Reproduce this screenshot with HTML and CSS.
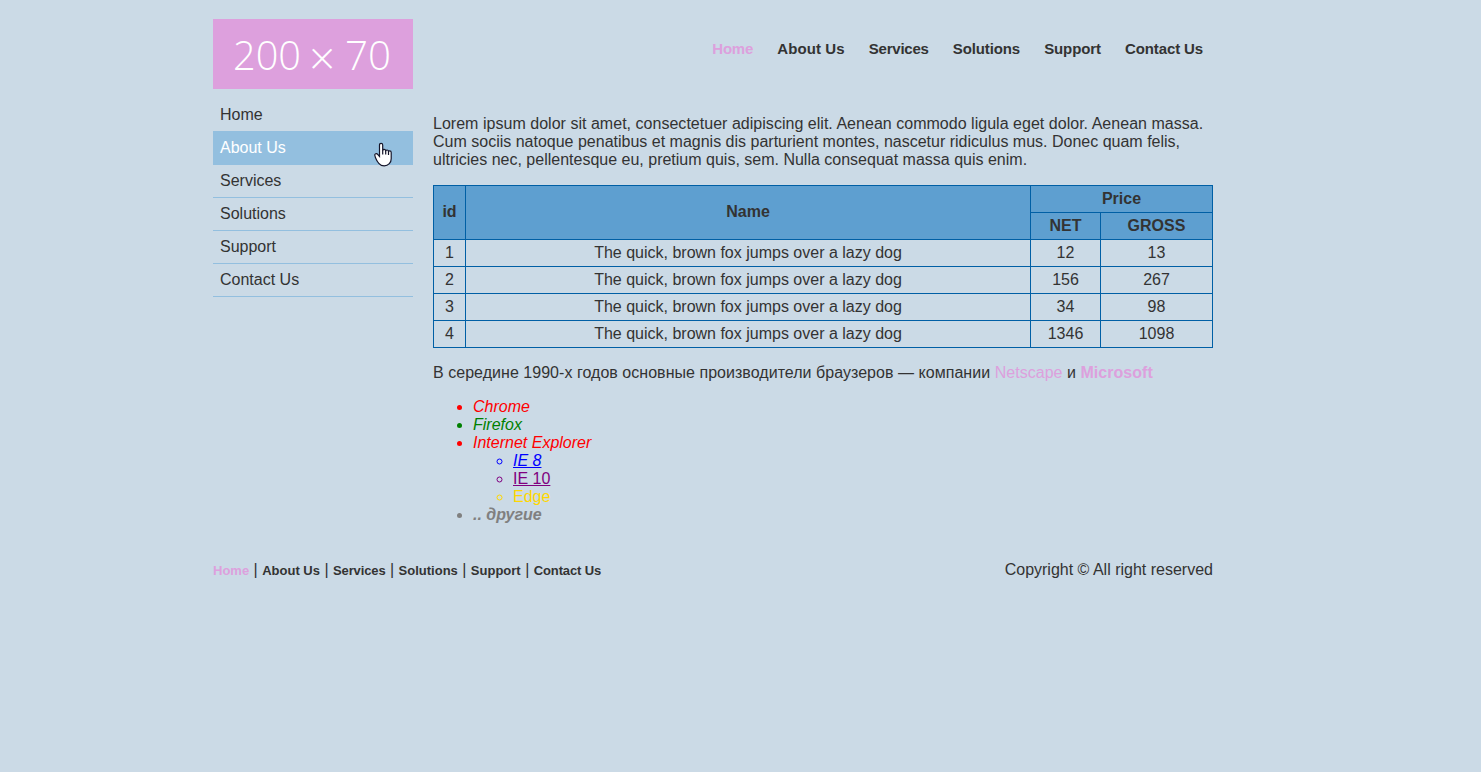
FILE: index.html
```html
<!DOCTYPE html>
<html lang="ru">
<head>
<meta charset="utf-8">
<title>Home</title>
<link rel="stylesheet" href="styles.css">
</head>
<body>
<div class="wrapper">
  <header class="header">
    <a class="logo"><svg width="200" height="70" viewBox="0 0 200 70"><g class="logo-text"><text x="20" y="51" textLength="68" lengthAdjust="spacingAndGlyphs">200</text><text class="times" x="96" y="56">×</text><text x="132" y="51" textLength="46" lengthAdjust="spacingAndGlyphs">70</text></g></svg></a>
    <nav class="top-nav">
      <a class="current tight">Home</a>
      <a class="loose">About Us</a>
      <a class="tight">Services</a>
      <a class="snug">Solutions</a>
      <a class="snug">Support</a>
      <a class="snug">Contact Us</a>
    </nav>
  </header>
  <div class="columns">
    <aside class="sidebar">
      <a>Home</a>
      <a class="hover">About Us
        <svg class="cursor" width="18" height="25" viewBox="0 0 18 25"><path d="M5.500 14.500V3q0-1.700 1.600-1.700T8.700 3v5.200q.3-.8 1.500-.8t1.500 1.200q.4-.6 1.400-.6 1.200 0 1.400 1.300.4-.5 1.200-.5 1.500 0 1.500 1.700v6.200q0 3-1.900 5-2 2.100-5.100 2.100-3.400 0-5.400-2.500Q3 19.500 1.500 15.800L.9 13.600q-.4-1.500.7-1.900 1.400-.5 2.300 1Z"/><path d="M8.700 8v4.500M11.700 8.500v4M14.500 9.500v3.500"/></svg>
      </a>
      <a>Services</a>
      <a>Solutions</a>
      <a>Support</a>
      <a>Contact Us</a>
    </aside>
    <main class="content">
      <p class="intro">Lorem ipsum dolor sit amet, consectetuer adipiscing elit. Aenean commodo ligula eget dolor. Aenean massa. Cum sociis natoque penatibus et magnis dis parturient montes, nascetur ridiculus mus. Donec quam felis, ultricies nec, pellentesque eu, pretium quis, sem. Nulla consequat massa quis enim.</p>
      <table class="prices">
        <colgroup><col class="col-id"><col><col class="col-net"><col class="col-gross"></colgroup>
        <thead>
          <tr><th class="tall" rowspan="2">id</th><th class="tall" rowspan="2">Name</th><th colspan="2">Price</th></tr>
          <tr><th>NET</th><th>GROSS</th></tr>
        </thead>
        <tbody>
          <tr><td>1</td><td>The quick, brown fox jumps over a lazy dog</td><td>12</td><td>13</td></tr>
          <tr><td>2</td><td>The quick, brown fox jumps over a lazy dog</td><td>156</td><td>267</td></tr>
          <tr><td>3</td><td>The quick, brown fox jumps over a lazy dog</td><td>34</td><td>98</td></tr>
          <tr><td>4</td><td>The quick, brown fox jumps over a lazy dog</td><td>1346</td><td>1098</td></tr>
        </tbody>
      </table>
      <p class="history">В середине 1990-х годов основные производители браузеров — компании <span class="plum">Netscape</span> и <b class="plum">Microsoft</b></p>
      <ul class="browsers">
        <li class="red">Chrome</li>
        <li class="green">Firefox</li>
        <li class="red">Internet Explorer
          <ul>
            <li class="blue"><u>IE 8</u></li>
            <li class="purple"><u>IE 10</u></li>
            <li class="gold">Edge</li>
          </ul>
        </li>
        <li class="other">.. другие</li>
      </ul>
    </main>
  </div>
  <footer class="footer">
    <nav class="bottom-nav"><a class="current">Home</a> | <a>About Us</a> | <a class="snug">Services</a> | <a>Solutions</a> | <a>Support</a> | <a class="snug">Contact Us</a></nav>
    <span>Copyright © All right reserved</span>
  </footer>
</div>
</body>
</html>
```
FILE: styles.css
```css
body {
  margin: 0;
  background: #cbdae6;
  color: #333;
  font: 16px/18px Arial, "Liberation Sans", sans-serif;
}

.wrapper {
  width: 1000px;
  margin-left: 213px;
  padding-top: 19px;
}

.header {
  display: flex;
  justify-content: space-between;
  height: 70px;
}

.logo {
  display: block;
  width: 200px;
  height: 70px;
  background: #dda0dd;
}

.logo svg { display: block; }

.logo-text {
  font-family: "Open Sans", sans-serif;
  font-size: 40px;
  font-weight: 300;
  fill: #fff;
}

.logo-text .times { font-size: 46px; }

.top-nav {
  padding-top: 21px;
  font-size: 15px;
  font-weight: bold;
}

.top-nav a {
  display: inline-block;
  padding: 0 10px;
}

.tight { letter-spacing: -0.25px; }
.snug { letter-spacing: -0.12px; }
.loose { letter-spacing: 0.1px; }

.top-nav .current,
.bottom-nav .current,
.plum { color: #dda0dd; }

.columns {
  display: flex;
  gap: 20px;
}

.sidebar {
  width: 200px;
  padding-top: 10px;
}

.sidebar a {
  display: block;
  position: relative;
  padding: 7px;
  border-bottom: 1px solid #93bfdf;
}

.sidebar .hover {
  background: #93bfdf;
  color: #fff;
}

/* the band covers the divider above it */
.sidebar .hover { box-shadow: 0 -1px #93bfdf; }

.cursor {
  position: absolute;
  left: 161px;
  top: 10px;
  z-index: 1;
  fill: #fff;
  stroke: #15152a;
  stroke-width: 1.2;
}

.content {
  width: 780px;
  padding-top: 26px;
}

.content p { margin: 0 0 16px; }
.intro::first-line { letter-spacing: 0.025px; }
.history { letter-spacing: 0.035px; }

.prices {
  width: 780px;
  margin-bottom: 16px;
  table-layout: fixed;
  border-collapse: collapse;
  text-align: center;
}

.prices th,
.prices td {
  padding: 4px 0;
  border: 1px solid #005fa5;
}

.prices th { background: #5e9fd0; }
.prices .tall { padding-bottom: 6px; }
.col-id { width: 32px; }
.col-net { width: 70px; }
.col-gross { width: 112px; }

.browsers {
  margin: 0;
  padding-left: 40px;
}

.browsers ul { padding-left: 40px; }
.red { color: red; font-style: italic; }
.green { color: green; font-style: italic; }
.blue { color: blue; }
.purple { color: purple; font-style: normal; }
.gold { color: gold; font-style: normal; }
.other { color: gray; font-style: italic; font-weight: bold; }

.footer {
  display: flex;
  justify-content: space-between;
  padding-top: 37px;
}

.bottom-nav a {
  font-size: 13px;
  font-weight: bold;
}
```
